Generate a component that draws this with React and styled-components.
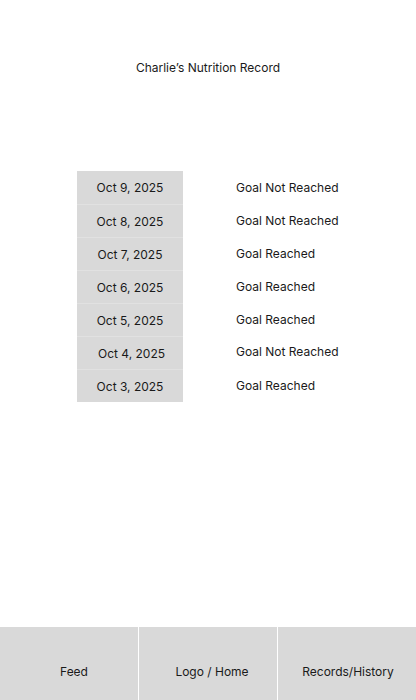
import React from "react";
import styled, { createGlobalStyle } from "styled-components";

const Global = createGlobalStyle`
  html, body { margin: 0; padding: 0; background: #fff; }
  body { font-family: Inter, "Noto Sans", sans-serif; color: #1a1a1a; }
`;

const Page = styled.div`
  width: 416px;
  height: 700px;
  display: flex;
  flex-direction: column;
  background: #fff;
`;

const Title = styled.h1`
  margin: 0;
  padding-top: 60px;
  font-size: 12px;
  font-weight: 400;
  line-height: 16px;
  text-align: center;
`;

const Table = styled.div`
  margin: 95px 0 0 77px;
  display: grid;
  grid-template-columns: 106px auto;
  column-gap: 53px;
`;

const DateCell = styled.div`
  height: 33px;
  box-sizing: border-box;
  display: flex;
  align-items: center;
  justify-content: center;
  background: #d9d9d9;
  font-size: 12px;
  border-top: ${(p) => (p.$first ? "none" : "1px solid #e1e1e1")};
  padding-left: ${(p) => p.$shift || 0}px;
`;

const StatusCell = styled.div`
  height: 33px;
  display: flex;
  align-items: center;
  font-size: 12px;
  margin-top: ${(p) => p.$dy || 0}px;
`;

const Spacer = styled.div`
  flex: 1;
`;

const Nav = styled.nav`
  height: 73px;
  display: grid;
  grid-template-columns: 138px 138px 139px;
  column-gap: 1px;
  background: #fff;
`;

const NavItem = styled.div`
  background: #d9d9d9;
  display: flex;
  align-items: center;
  justify-content: center;
  padding-top: 15px;
  padding-left: ${(p) => p.$offset || 0}px;
  font-size: 12px;
`;

const rows = [
  ["Oct 9, 2025", "Goal Not Reached"],
  ["Oct 8, 2025", "Goal Not Reached"],
  ["Oct 7, 2025", "Goal Reached"],
  ["Oct 6, 2025", "Goal Reached"],
  ["Oct 5, 2025", "Goal Reached"],
  ["Oct 4, 2025", "Goal Not Reached", 3, -1],
  ["Oct 3, 2025", "Goal Reached"],
];

export default function App() {
  return (
    <Page>
      <Global />
      <Title>Charlie’s Nutrition Record</Title>
      <Table>
        {rows.map(([d, s, shift, dy], i) => (
          <React.Fragment key={d}>
            <DateCell $first={i === 0} $shift={shift}>{d}</DateCell>
            <StatusCell $dy={dy}>{s}</StatusCell>
          </React.Fragment>
        ))}
      </Table>
      <Spacer />
      <Nav>
        <NavItem $offset={10}>Feed</NavItem>
        <NavItem $offset={8}>Logo / Home</NavItem>
        <NavItem $offset={1}>Records/History</NavItem>
      </Nav>
    </Page>
  );
}
